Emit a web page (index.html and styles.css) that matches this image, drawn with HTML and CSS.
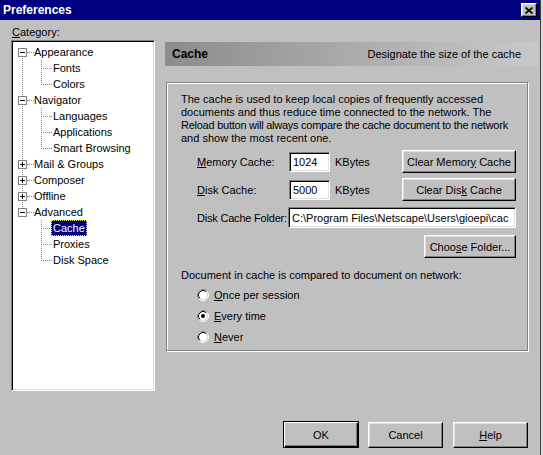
FILE: index.html
```html
<!DOCTYPE html>
<html>
<head>
<meta charset="utf-8">
<title>Preferences</title>
<link rel="stylesheet" href="styles.css">
</head>
<body>
<div class="window">
  <div class="titlebar">
    <span class="title">Preferences</span>
    <span class="close"><svg width="8" height="7" viewBox="0 0 8 7"><path d="M0.5 0.5L7.5 6.5M7.5 0.5L0.5 6.5" stroke="#000" stroke-width="1.6"/></svg></span>
  </div>
  <div class="main">
    <div class="left">
      <div class="cat-label"><u>C</u>ategory:</div>
      <div class="tree">
        <div class="node"><svg width="20" height="16"><path class="dl" d="M8.5 14v2M13 8.5h7"/><rect class="bx" x="4.5" y="4.5" width="8" height="8"/><path class="sg" d="M6 8.5h5"/></svg><span class="label">Appearance</span></div>
        <div class="node"><svg width="39" height="16"><path class="dl" d="M8.5 0v16M27.5 0v16M29 8.5h10"/></svg><span class="label">Fonts</span></div>
        <div class="node"><svg width="39" height="16"><path class="dl" d="M8.5 0v16M27.5 0v9M29 8.5h10"/></svg><span class="label">Colors</span></div>
        <div class="node"><svg width="20" height="16"><path class="dl" d="M8.5 0v4M8.5 14v2M13 8.5h7"/><rect class="bx" x="4.5" y="4.5" width="8" height="8"/><path class="sg" d="M6 8.5h5"/></svg><span class="label">Navigator</span></div>
        <div class="node"><svg width="39" height="16"><path class="dl" d="M8.5 0v16M27.5 0v16M29 8.5h10"/></svg><span class="label">Languages</span></div>
        <div class="node"><svg width="39" height="16"><path class="dl" d="M8.5 0v16M27.5 0v16M29 8.5h10"/></svg><span class="label">Applications</span></div>
        <div class="node"><svg width="39" height="16"><path class="dl" d="M8.5 0v16M27.5 0v9M29 8.5h10"/></svg><span class="label">Smart Browsing</span></div>
        <div class="node"><svg width="20" height="16"><path class="dl" d="M8.5 0v4M8.5 14v2M13 8.5h7"/><rect class="bx" x="4.5" y="4.5" width="8" height="8"/><path class="sg" d="M6 8.5h5M8.5 6v5"/></svg><span class="label">Mail &amp; Groups</span></div>
        <div class="node"><svg width="20" height="16"><path class="dl" d="M8.5 0v4M8.5 14v2M13 8.5h7"/><rect class="bx" x="4.5" y="4.5" width="8" height="8"/><path class="sg" d="M6 8.5h5M8.5 6v5"/></svg><span class="label">Composer</span></div>
        <div class="node"><svg width="20" height="16"><path class="dl" d="M8.5 0v4M8.5 14v2M13 8.5h7"/><rect class="bx" x="4.5" y="4.5" width="8" height="8"/><path class="sg" d="M6 8.5h5M8.5 6v5"/></svg><span class="label">Offline</span></div>
        <div class="node"><svg width="20" height="16"><path class="dl" d="M8.5 0v4M13 8.5h7"/><rect class="bx" x="4.5" y="4.5" width="8" height="8"/><path class="sg" d="M6 8.5h5"/></svg><span class="label">Advanced</span></div>
        <div class="node"><svg width="39" height="16"><path class="dl" d="M27.5 0v16M29 8.5h10"/></svg><span class="label sel">Cache</span></div>
        <div class="node"><svg width="39" height="16"><path class="dl" d="M27.5 0v16M29 8.5h10"/></svg><span class="label">Proxies</span></div>
        <div class="node"><svg width="39" height="16"><path class="dl" d="M27.5 0v9M29 8.5h10"/></svg><span class="label">Disk Space</span></div>
      </div>
    </div>
    <div class="right">
      <div class="header">
        <span class="h-title">Cache</span>
        <span class="h-desc">Designate the size of the cache</span>
      </div>
      <div class="group">
        <p class="desc"><span class="ln">The cache is used to keep local copies of frequently accessed</span><span class="ln">documents and thus reduce time connected to the network. The</span><span class="ln tight">Reload button will always compare the cache document to the network</span><span class="ln">and show the most recent one.</span></p>
        <div class="form">
          <div class="row row-mem">
            <span class="lbl"><u>M</u>emory Cache:</span>
            <span class="field num">1024</span>
            <span class="unit">KBytes</span>
            <button class="btn btn-clear">Clear Memor<u>y</u> Cache</button>
          </div>
          <div class="row row-disk">
            <span class="lbl"><u>D</u>isk Cache:</span>
            <span class="field num">5000</span>
            <span class="unit">KBytes</span>
            <button class="btn btn-clear">Clear Dis<u>k</u> Cache</button>
          </div>
          <div class="row row-folder">
            <span class="lbl lbl-folder">Disk Cache Folder:</span>
            <span class="field path">C:\Program Files\Netscape\Users\gioepi\cac</span>
          </div>
          <div class="row row-choose">
            <button class="btn btn-choose">Choo<u>s</u>e Folder...</button>
          </div>
        </div>
        <p class="compare">Document in cache is compared to document on network:</p>
        <div class="radios">
          <div class="radio"><svg width="12" height="12"><circle cx="6" cy="6" r="5.5" fill="none" stroke="#fff"/><path d="M2.11 9.89A5.5 5.5 0 0 1 9.89 2.11" fill="none" stroke="#808080"/><circle cx="6" cy="6" r="4.5" fill="#fff" stroke="#dfdfdf"/><path d="M2.82 9.18A4.5 4.5 0 0 1 9.18 2.82" fill="none" stroke="#000"/></svg><span class="r-lbl"><u>O</u>nce per session</span></div>
          <div class="radio"><svg width="12" height="12"><circle cx="6" cy="6" r="5.5" fill="none" stroke="#fff"/><path d="M2.11 9.89A5.5 5.5 0 0 1 9.89 2.11" fill="none" stroke="#808080"/><circle cx="6" cy="6" r="4.5" fill="#fff" stroke="#dfdfdf"/><path d="M2.82 9.18A4.5 4.5 0 0 1 9.18 2.82" fill="none" stroke="#000"/><circle cx="6" cy="6" r="2" fill="#000"/></svg><span class="r-lbl"><u>E</u>very time</span></div>
          <div class="radio"><svg width="12" height="12"><circle cx="6" cy="6" r="5.5" fill="none" stroke="#fff"/><path d="M2.11 9.89A5.5 5.5 0 0 1 9.89 2.11" fill="none" stroke="#808080"/><circle cx="6" cy="6" r="4.5" fill="#fff" stroke="#dfdfdf"/><path d="M2.82 9.18A4.5 4.5 0 0 1 9.18 2.82" fill="none" stroke="#000"/></svg><span class="r-lbl"><u>N</u>ever</span></div>
        </div>
      </div>
    </div>
  </div>
  <div class="actions">
    <button class="btn btn-ok">OK</button>
    <button class="btn btn-act">Cancel</button>
    <button class="btn btn-act"><u>H</u>elp</button>
  </div>
</div>
</body>
</html>
```
FILE: styles.css
```css
* { box-sizing: border-box; }

body {
  margin: 0;
  background: #dcdcdc;
  font-family: "Liberation Sans", Arial, sans-serif;
  font-size: 11px;
  color: #000;
}

.window {
  width: 541px;
  height: 455px;
  background: #c0c0c0;
  border-right: 1px solid #404040;
  display: flex;
  flex-direction: column;
}

.titlebar {
  height: 20px;
  flex: none;
  background: #000080;
  color: #fff;
  display: flex;
  align-items: center;
  justify-content: space-between;
  padding: 0 3px 0 3px;
}

.title {
  font-weight: bold;
  font-size: 12px;
}

.close {
  width: 16px;
  height: 14px;
  background: #c0c0c0;
  border: 1px solid;
  border-color: #fff #000 #000 #fff;
  box-shadow: inset -1px -1px #808080, inset 1px 1px #dfdfdf;
  display: flex;
  align-items: center;
  justify-content: center;
}

.close svg { display: block; }

.main {
  flex: 1;
  display: flex;
  gap: 10px;
  padding-left: 11px;
  min-height: 0;
}

.left {
  width: 144px;
  display: flex;
  flex-direction: column;
}

.cat-label {
  height: 20px;
  padding: 6px 0 0 1px;
  line-height: 13px;
}

.tree {
  height: 351px;
  background: #fff;
  border: 1px solid;
  border-color: #808080 #fff #fff #808080;
  box-shadow: inset 1px 1px #000, inset -1px -1px #dfdfdf;
  padding: 3px 0 0 2px;
}

.node {
  display: flex;
  align-items: center;
  height: 16px;
  white-space: nowrap;
}

.node svg {
  flex: none;
  display: block;
  shape-rendering: crispEdges;
}

.dl {
  fill: none;
  stroke: #808080;
  stroke-dasharray: 1 1;
}

.bx {
  fill: #fff;
  stroke: #808080;
}

.sg {
  fill: none;
  stroke: #000;
}

.label {
  margin-left: -2px;
  padding: 0 1px;
  border: 1px dotted transparent;
  line-height: 14px;
}

.label.sel {
  background: #000080;
  color: #fff;
  border-color: #e8e870;
}

.right {
  width: 373px;
  padding-top: 22px;
  display: flex;
  flex-direction: column;
}

.header {
  height: 24px;
  flex: none;
  background: linear-gradient(to right, #8c8c8c, #c9c9c9);
  display: flex;
  align-items: center;
  justify-content: space-between;
  padding: 0 17px 0 7px;
}

.h-title {
  font-weight: bold;
  font-size: 12px;
}

.group {
  margin: 16px 0 0 1px;
  width: 362px;
  height: 269px;
  border: 1px solid #808080;
  box-shadow: inset 1px 1px #fff, 1px 1px #fff;
  padding: 10px 11px 0 14px;
}

.desc {
  margin: 0;
  line-height: 13px;
  white-space: nowrap;
}

.ln { display: block; }
.ln.tight { letter-spacing: -0.25px; }

.form { padding-left: 16px; }

.row {
  display: flex;
  align-items: center;
  height: 23px;
}

.row-mem { margin-top: 5px; }
.row-disk { margin-top: 5px; }
.row-folder { margin-top: 6px; height: 21px; }
.row-choose { margin-top: 7px; justify-content: flex-end; }

.lbl { width: 92px; flex: none; white-space: nowrap; }
.lbl-folder { width: 91px; letter-spacing: -0.2px; }

.field {
  background: #fff;
  height: 20px;
  border: 1px solid;
  border-color: #808080 #fff #fff #808080;
  box-shadow: inset 1px 1px #000, inset -1px -1px #dfdfdf;
  padding: 0 3px;
  display: flex;
  align-items: center;
  white-space: nowrap;
  overflow: hidden;
}

.num { width: 41px; }

.path {
  flex: 1;
  height: 21px;
}

.unit { margin-left: 5px; }

.btn {
  font-family: inherit;
  font-size: 11px;
  color: #000;
  background: #c0c0c0;
  border: 1px solid;
  border-color: #fff #000 #000 #fff;
  box-shadow: inset -1px -1px #808080, inset 1px 1px #dfdfdf;
  padding: 0;
  margin: 0;
  height: 23px;
}

.btn-clear {
  margin-left: auto;
  width: 114px;
}

.btn-choose { width: 92px; }

.compare {
  margin: 11px 0 0 0;
  line-height: 13px;
}

.radios {
  margin-top: 2px;
  padding-left: 16px;
}

.radio {
  display: flex;
  align-items: center;
  height: 21px;
}

.radio svg { display: block; flex: none; }

.r-lbl { margin-left: 5px; }

.actions {
  flex: none;
  display: flex;
  justify-content: flex-end;
  align-items: flex-end;
  padding: 0 12px 7px 0;
}

.btn-act {
  width: 75px;
  height: 26px;
  margin-left: 10px;
}

.btn-ok {
  width: 76px;
  height: 27px;
  border: 1px solid #000;
  box-shadow: inset 1px 1px #fff, inset -1px -1px #000, inset -2px -2px #808080;
}

.btn-ok + .btn-act { margin-left: 9px; }
```
